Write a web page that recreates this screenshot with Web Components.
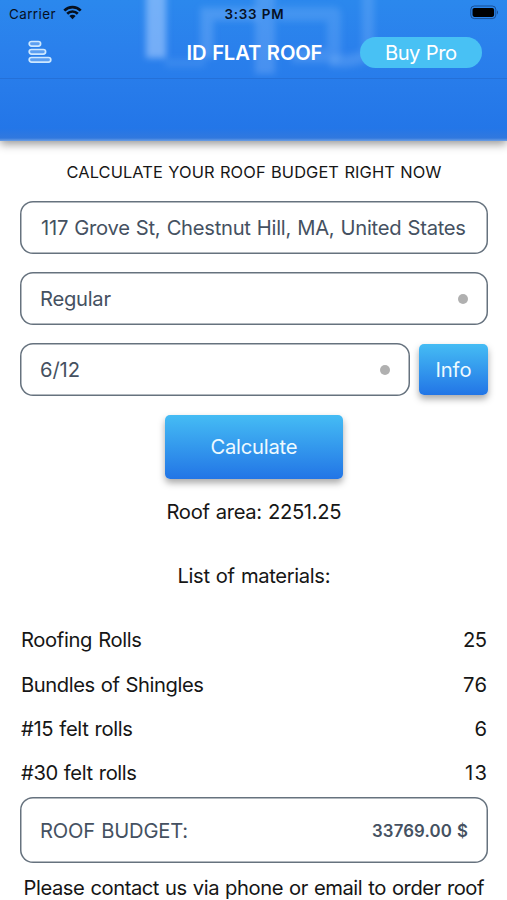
<!DOCTYPE html>
<html lang="en">
<head>
<meta charset="utf-8">
<title>ID Flat Roof</title>
<style>
html,body{margin:0;height:900px;overflow:hidden;background:#fff}
body{font-family:Inter,"Liberation Sans",sans-serif;color:#161616;font-size:20.2px}
</style>
</head>
<body>
<roof-app></roof-app>
<script>
const define = (name, html, setup) => {
  const tpl = document.createElement('template');
  tpl.innerHTML = html;
  customElements.define(name, class extends HTMLElement {
    connectedCallback() {
      if (!this.shadowRoot) this.attachShadow({mode: 'open'}).append(tpl.content.cloneNode(true));
      if (setup) setup(this);
    }
  });
};

// A line of text whose tracking is adjusted to a given width.
define('text-line', `<style>
:host{display:inline-block;white-space:nowrap;line-height:24px;height:24px;word-spacing:.04em}
span{display:inline-block}
</style><span><slot></slot></span>`, el => {
  const w = +el.getAttribute('w');
  if (!w) return;
  const natural = el.shadowRoot.querySelector('span').getBoundingClientRect().width;
  const n = el.textContent.length;
  const ls = (w - natural) / (n - 1);
  el.style.letterSpacing = ls + 'px';
  el.style.marginRight = -ls + 'px';
});

define('status-bar', `<style>
:host{display:grid;grid-template-columns:1fr auto 1fr;align-items:center;height:27px;padding:0 8px 0 9px;color:#06101f;font-size:13.4px}
.l{display:flex;align-items:center;gap:7px}
.r{justify-self:end;display:flex}
svg{display:block;position:relative;top:-1px}
b{font-weight:600}
</style>
<div class="l"><text-line w="46.5">Carrier</text-line>
<svg width="19" height="15" viewBox="0 0 19 15" fill="none" stroke="#06101f" stroke-width="2.7"><path d="M1.3 5.6A11.6 11.6 0 0 1 17.7 5.6M4.2 8.7A7.5 7.5 0 0 1 14.8 8.7"/><path d="M9.5 14.3L6.4 11.1A4.4 4.4 0 0 1 12.6 11.1Z" fill="#06101f" stroke="none"/></svg></div>
<b><text-line w="59">3:33 PM</text-line></b>
<div class="r"><svg width="29" height="15" viewBox="0 0 29 15"><rect x=".8" y="1" width="25" height="12.6" rx="3.5" fill="none" stroke="#0b2c5c" stroke-opacity=".6"/><rect x="2.5" y="2.9" width="21.6" height="9" rx="1.8" fill="#000"/><path d="M27 5.2q2 2.1 0 4.2z" fill="#0b2c5c" opacity=".65"/></svg></div>`);

define('nav-bar', `<style>
:host{display:grid;grid-template-columns:1fr auto 1fr;align-items:center;height:51px;padding:0 25px 0 27px;color:#fff}
svg{display:block;position:relative;top:-1px}
.t{font-weight:600}
.p{justify-self:end;width:122px;height:31px;border-radius:16px;background:#48c1f4;display:flex;align-items:center;justify-content:center}
</style>
<svg width="25" height="24" viewBox="0 0 25 24" fill="#5c9ff1" stroke="#cde8ff" stroke-width="1.7"><rect x="2.2" y="1.5" width="11.4" height="4.6" rx="2.3"/><rect x="2.2" y="9.5" width="16.4" height="4.6" rx="2.3"/><rect x="2.2" y="17.5" width="21.6" height="4.6" rx="2.3"/></svg>
<div class="t"><text-line w="136">ID FLAT ROOF</text-line></div>
<div class="p"><text-line w="72">Buy Pro</text-line></div>`);

define('app-header', `<style>
:host{display:block;height:141px;position:relative;background:linear-gradient(#2b88ed 0,#2a80ec 50px,#277bea 90px,#2376e8 128px,#3178de 138px,#6c9fe4 141px);box-shadow:0 3px 9px 0 rgba(0,0,0,.42)}
.logo{position:absolute;left:0;top:0;width:507px;height:78px;overflow:hidden}
.bar{position:relative;border-bottom:1px solid #2470d8}
</style>
<svg class="logo" viewBox="0 0 507 78"><defs><filter id="b" filterUnits="userSpaceOnUse" x="100" y="-60" width="320" height="180"><feGaussianBlur stdDeviation="3.4"/></filter></defs>
<g fill="none" stroke="#a5ccff" filter="url(#b)"><path d="M156-20V58" stroke-width="20" opacity=".6"/><path d="M165 63H205" stroke-width="8" opacity=".14"/><path d="M207 58V14H258" stroke-width="13" opacity=".26"/><path d="M265-10V74" stroke-width="20" opacity=".25"/><path d="M278 14H334V56H292" stroke-width="14" stroke-linejoin="round" opacity=".2"/><path d="M368-20V54Q355 63 330 61" stroke-width="12" opacity=".22"/></g></svg>
<div class="bar"><status-bar></status-bar><nav-bar></nav-bar></div>`);

define('outline-field', `<style>
:host{display:flex;box-sizing:border-box;align-items:center;justify-content:space-between;height:53px;border-radius:13px;padding:1px 21px 0;color:#455161;background:#fff;box-shadow:inset 0 0 0 1.5px #66727e}
</style><slot></slot>`);

define('select-field', `<style>
:host{display:block}
i{width:10px;height:10px;border-radius:50%;background:#b0b0b0}
</style><outline-field style="padding:1px 20px 0"><slot></slot><i></i></outline-field>`);

define('blue-button', `<style>
:host{display:flex;align-items:center;justify-content:center;border-radius:5px;color:#eefaff;background:linear-gradient(#45bcf4,#2275e6);box-shadow:0 4px 7px rgba(0,0,0,.34)}
</style><slot></slot>`);

define('material-row', `<style>
:host{display:flex;align-items:center;justify-content:space-between;height:44.4px;padding:0 1px}
</style><slot name="name"></slot><slot name="count"></slot>`);

define('roof-app', `<style>
:host{display:block;width:507px;height:900px;overflow:hidden}
main{display:flex;flex-direction:column;padding:0 19px 0 20px}
h1{margin:19px 0 17px;font-size:16.4px;font-weight:400;height:24px;text-align:center}
.fields{display:flex;flex-direction:column;gap:18px}
.pitch{display:grid;grid-template-columns:390px 69px;gap:9px;align-items:center}
.info{height:51px}
.calc{width:178px;height:64px;margin:19px auto 0}
.c{display:flex;justify-content:center;height:24px}
.area{margin-top:21px}.list{margin:40px 0 30px}
.budget{height:66px;margin-top:1px;padding:2px 20px 0}
.sum{font-size:16.8px;font-weight:600}
.contact{margin-top:13px}
</style>
<app-header></app-header>
<main>
<h1><text-line w="375">CALCULATE YOUR ROOF BUDGET RIGHT NOW</text-line></h1>
<div class="fields">
<outline-field><text-line w="425">117 Grove St, Chestnut Hill, MA, United States</text-line></outline-field>
<select-field><text-line w="71">Regular</text-line></select-field>
<div class="pitch"><select-field><text-line w="40">6/12</text-line></select-field><blue-button class="info"><text-line w="36">Info</text-line></blue-button></div>
</div>
<blue-button class="calc"><text-line w="87">Calculate</text-line></blue-button>
<div class="c area"><text-line w="175">Roof area: 2251.25</text-line></div>
<div class="c list"><text-line w="153">List of materials:</text-line></div>
<material-row><text-line slot="name" w="121">Roofing Rolls</text-line><text-line slot="count" w="24">25</text-line></material-row>
<material-row><text-line slot="name" w="183">Bundles of Shingles</text-line><text-line slot="count" w="24">76</text-line></material-row>
<material-row><text-line slot="name" w="112">#15 felt rolls</text-line><text-line slot="count">6</text-line></material-row>
<material-row><text-line slot="name" w="116">#30 felt rolls</text-line><text-line slot="count" w="22">13</text-line></material-row>
<outline-field class="budget"><text-line w="148">ROOF BUDGET:</text-line><text-line class="sum" w="96">33769.00 $</text-line></outline-field>
<div class="c contact"><text-line w="461">Please contact us via phone or email to order roof</text-line></div>
</main>`);
</script>
</body>
</html>
